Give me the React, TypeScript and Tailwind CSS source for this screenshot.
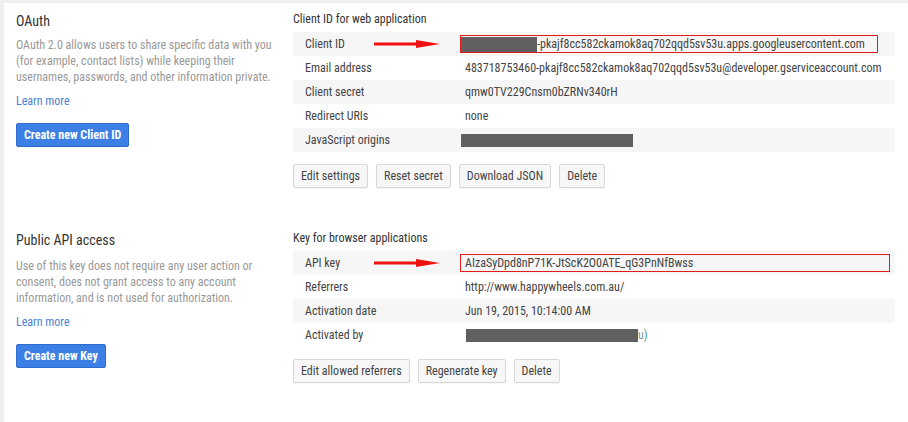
import React from "react";

const font = { fontFamily: '"Roboto Condensed", Roboto, "Liberation Sans", sans-serif' };

type Row = { label: string; value: React.ReactNode; arrow?: boolean; box?: string };

function Arrow() {
  return (
    <svg width="66" height="10" viewBox="0 0 66 10" className="absolute left-[81px] top-[7px]">
      <rect x="0" y="3.5" width="44" height="3" fill="#ee1111" />
      <polygon points="42,1 66,5 42,9" fill="#ee1111" />
    </svg>
  );
}

function Redact({ w, className = "" }: { w: string; className?: string }) {
  return <span className={`inline-block bg-[#606060] align-middle ${w} ${className}`} />;
}

function KeyTable({ rows }: { rows: Row[] }) {
  return (
    <div className="mt-[5px] w-[602px]">
      {rows.map((r, i) => (
        <div
          key={r.label}
          className={`relative flex h-6 items-center text-[12px] text-[#444] ${i % 2 === 0 ? "bg-[#f6f6f6]" : ""}`}
        >
          <div className="w-[172px] shrink-0 pl-3">{r.label}</div>
          {r.arrow && <Arrow />}
          <div className="flex h-full flex-1 items-center">
            {r.box ? (
              <div className={`-ml-[5px] flex h-[18px] items-center border border-[#e01b1b] pl-1 ${r.box}`}>
                {r.value}
              </div>
            ) : (
              r.value
            )}
          </div>
        </div>
      ))}
    </div>
  );
}

function Btn({ children }: { children: React.ReactNode }) {
  return (
    <button className="h-6 rounded-[2px] border border-[#d8d8d8] bg-[#f7f7f7] px-[7px] text-[12px] text-[#444] shadow-[0_1px_0_rgba(0,0,0,0.04)]">
      {children}
    </button>
  );
}

function Section({
  title,
  desc,
  cta,
  heading,
  rows,
  actions,
  descTop,
}: {
  title: string;
  desc: string;
  cta: string;
  heading: string;
  rows: Row[];
  actions: string[];
  descTop: string;
}) {
  return (
    <div className="flex">
      <div className="w-[289px] shrink-0 pl-3">
        <h2 className="text-[14px] leading-5 text-[#333]">{title}</h2>
        <p className={`w-[262px] text-[12px] leading-4 text-[#999] ${descTop}`}>{desc}</p>
        <a className="mt-[8px] block text-[12px] leading-4 text-[#4a7fd6]">Learn more</a>
        <button className="mt-[14px] h-6 rounded-[2px] border border-[#2f6cd0] bg-[#3c80e6] px-[7px] text-[12px] font-bold text-white">
          {cta}
        </button>
      </div>
      <div className="flex-1">
        <h3 className="text-[12px] leading-4 text-[#333]">{heading}</h3>
        <KeyTable rows={rows} />
        <div className="mt-[12px] flex gap-[8px]">
          {actions.map((a) => (
            <Btn key={a}>{a}</Btn>
          ))}
        </div>
      </div>
    </div>
  );
}

export default function App() {
  const oauthRows: Row[] = [
    {
      label: "Client ID",
      arrow: true,
      box: "w-[418px]",
      value: (
        <span className="flex items-center">
          <Redact w="w-[76px] h-[15px]" className="-ml-1" />
          -pkajf8cc582ckamok8aq702qqd5sv53u.apps.googleusercontent.com
        </span>
      ),
    },
    { label: "Email address", value: "483718753460-pkajf8cc582ckamok8aq702qqd5sv53u@developer.gserviceaccount.com" },
    { label: "Client secret", value: "qmw0TV229Cnsm0bZRNv340rH" },
    { label: "Redirect URIs", value: "none" },
    { label: "JavaScript origins", value: <Redact w="w-[172px] h-[13px]" className="-ml-1" /> },
  ];

  const keyRows: Row[] = [
    { label: "API key", arrow: true, box: "w-[430px]", value: "AIzaSyDpd8nP71K-JtScK2O0ATE_qG3PnNfBwss" },
    { label: "Referrers", value: "http://www.happywheels.com.au/" },
    { label: "Activation date", value: "Jun 19, 2015, 10:14:00 AM" },
    {
      label: "Activated by",
      value: (
        <span className="flex items-center">
          <Redact w="w-[172px] h-[13px]" className="ml-[1px]" />
          <span className="text-[#7a9a90]">u</span>
          <span className="text-[#3a9a7a]">)</span>
        </span>
      ),
    },
  ];

  return (
    <div className="h-[422px] w-[908px] overflow-hidden bg-[#efefef] pl-1 pt-[3px]" style={font}>
      <div className="h-full bg-white pt-[8px]">
        <Section
          title="OAuth"
          desc="OAuth 2.0 allows users to share specific data with you (for example, contact lists) while keeping their usernames, passwords, and other information private."
          cta="Create new Client ID"
          heading="Client ID for web application"
          rows={oauthRows}
          actions={["Edit settings", "Reset secret", "Download JSON", "Delete"]}
          descTop="mt-[6px]"
        />
        <div className="mt-[42px]">
          <Section
            title="Public API access"
            desc="Use of this key does not require any user action or consent, does not grant access to any account information, and is not used for authorization."
            cta="Create new Key"
            heading="Key for browser applications"
            rows={keyRows}
            actions={["Edit allowed referrers", "Regenerate key", "Delete"]}
            descTop="mt-[8px]"
          />
        </div>
      </div>
    </div>
  );
}
